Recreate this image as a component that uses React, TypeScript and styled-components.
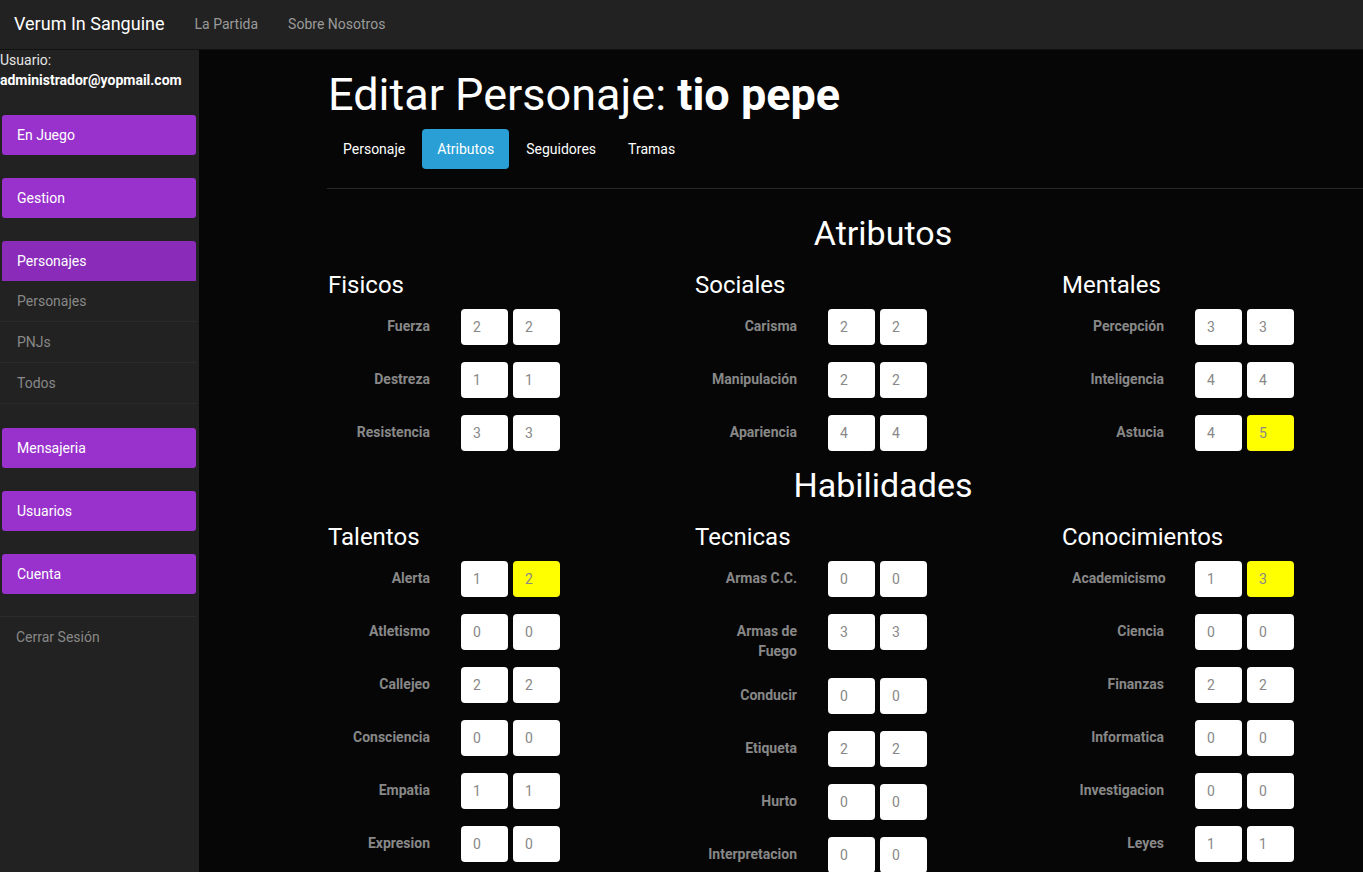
import React from "react";
import styled, { createGlobalStyle } from "styled-components";

const GlobalStyle = createGlobalStyle`
  html, body {
    margin: 0;
    padding: 0;
    overflow: hidden;
    background: #060606;
  }
  body {
    font-family: Roboto, "Helvetica Neue", Arial, sans-serif;
    font-size: 14px;
    line-height: 20px;
    color: #888;
  }
  * { box-sizing: border-box; }
`;

const Page = styled.div`
  display: flex;
  flex-direction: column;
  width: 1363px;
  height: 872px;
  overflow: hidden;
`;

const Navbar = styled.nav`
  height: 50px;
  flex: none;
  display: flex;
  align-items: center;
  background: #222;
  border-bottom: 1px solid #111;
  padding-left: 14px;
`;

const Brand = styled.span`
  font-size: 18px;
  color: #fff;
  margin-right: 30px;
  padding-bottom: 2px;
`;

const NavLink = styled.span`
  font-size: 14px;
  color: #9a9a9a;
  margin-right: 30px;
  padding-bottom: 2px;
`;

const Body = styled.div`
  display: flex;
  flex: 1;
  min-height: 0;
`;

const Sidebar = styled.aside`
  width: 199px;
  flex: none;
  background: #222;
  display: flex;
  flex-direction: column;
`;

const UserInfo = styled.div`
  color: #e6e6e6;
  line-height: 20px;
  margin-bottom: 25px;
`;

const Email = styled.div`
  font-weight: 700;
  color: #fff;
`;

const MenuButton = styled.div<{ $active?: boolean }>`
  margin: 0 3px 0 2px;
  height: 40px;
  display: flex;
  align-items: center;
  padding-left: 15px;
  border-radius: 3px;
  color: #fff;
  background: ${(p) => (p.$active ? "#8a2cb9" : "#9932cc")};
  margin-bottom: ${(p) => (p.$active ? "0" : "23px")};
  ${(p) => (p.$active ? "border-radius: 3px 3px 0 0;" : "")}
`;

const SubList = styled.div`
  margin: 0 2px 24px 0;
  display: flex;
  flex-direction: column;
`;

const SubItem = styled.div`
  height: 41px;
  display: flex;
  align-items: center;
  padding-left: 17px;
  color: #888;
  background: #222;
  border-bottom: 1px solid #2a2a2a;
`;

const Logout = styled.div`
  margin-top: -1px;
  margin-right: 4px;
  border-top: 1px solid #2c2c2c;
  height: 41px;
  display: flex;
  align-items: center;
  padding-left: 16px;
  color: #888;
`;

const Main = styled.main`
  flex: 1;
  min-width: 0;
  overflow: hidden;
  background: #060606;
`;

const Content = styled.div`
  width: 1110px;
  margin-left: 129px;
  padding-top: 20px;
`;

const Title = styled.h1`
  margin: 0;
  font-size: 45px;
  line-height: 49px;
  font-weight: 400;
  color: #fff;
  b {
    font-weight: 700;
  }
`;

const Tabs = styled.div`
  display: flex;
  gap: 2px;
  margin-top: 10px;
`;

const Tab = styled.div<{ $active?: boolean }>`
  height: 40px;
  padding: 0 15px 1px;
  display: flex;
  align-items: center;
  border-radius: 4px;
  color: #fff;
  background: ${(p) => (p.$active ? "#2a9fd6" : "transparent")};
`;

const Rule = styled.hr`
  margin: 19px 0 0 -1px;
  border: 0;
  border-top: 1px solid #282828;
  width: 1200px;
`;

const SectionTitle = styled.h2<{ $first?: boolean }>`
  margin: ${(p) => (p.$first ? "24px" : "14px")} 0 0;
  font-size: 34px;
  line-height: 40px;
  font-weight: 400;
  color: #fff;
  text-align: center;
`;

const Grid = styled.div`
  display: grid;
  grid-template-columns: repeat(3, 367px);
  margin-top: 19px;
`;

const Column = styled.div`
  display: flex;
  flex-direction: column;
`;

const ColTitle = styled.h3`
  margin: 0 0 11px;
  font-size: 24px;
  line-height: 26px;
  font-weight: 400;
  color: #fff;
`;

const Rows = styled.div`
  display: flex;
  flex-direction: column;
  gap: 17px;
`;

const Row = styled.div`
  display: flex;
  align-items: flex-start;
`;

const Label = styled.label`
  width: 102px;
  padding: 7px 0 0 10px;
  margin-right: 31px;
  text-align: right;
  font-weight: 700;
  line-height: 20px;
  color: #888;
`;

const Inputs = styled.div`
  display: flex;
  gap: 5px;
`;

const Box = styled.div<{ $changed?: boolean }>`
  width: 47px;
  height: 36px;
  border-radius: 4px;
  padding-left: 12px;
  display: flex;
  align-items: center;
  color: #888;
  background: ${(p) => (p.$changed ? "#ffff00" : "#fff")};
`;

type Stat = [string, number, number];

const attrs: { title: string; rows: Stat[] }[] = [
  { title: "Fisicos", rows: [["Fuerza", 2, 2], ["Destreza", 1, 1], ["Resistencia", 3, 3]] },
  { title: "Sociales", rows: [["Carisma", 2, 2], ["Manipulación", 2, 2], ["Apariencia", 4, 4]] },
  { title: "Mentales", rows: [["Percepción", 3, 3], ["Inteligencia", 4, 4], ["Astucia", 4, 5]] },
];

const skills: { title: string; rows: Stat[] }[] = [
  {
    title: "Talentos",
    rows: [
      ["Alerta", 1, 2],
      ["Atletismo", 0, 0],
      ["Callejeo", 2, 2],
      ["Consciencia", 0, 0],
      ["Empatia", 1, 1],
      ["Expresion", 0, 0],
    ],
  },
  {
    title: "Tecnicas",
    rows: [
      ["Armas C.C.", 0, 0],
      ["Armas de Fuego", 3, 3],
      ["Conducir", 0, 0],
      ["Etiqueta", 2, 2],
      ["Hurto", 0, 0],
      ["Interpretacion", 0, 0],
    ],
  },
  {
    title: "Conocimientos",
    rows: [
      ["Academicismo", 1, 3],
      ["Ciencia", 0, 0],
      ["Finanzas", 2, 2],
      ["Informatica", 0, 0],
      ["Investigacion", 0, 0],
      ["Leyes", 1, 1],
    ],
  },
];

const StatGrid = ({ groups }: { groups: { title: string; rows: Stat[] }[] }) => (
  <Grid>
    {groups.map((g) => (
      <Column key={g.title}>
        <ColTitle>{g.title}</ColTitle>
        <Rows>
          {g.rows.map(([name, a, b]) => (
            <Row key={name}>
              <Label>{name}</Label>
              <Inputs>
                <Box>{a}</Box>
                <Box $changed={a !== b}>{b}</Box>
              </Inputs>
            </Row>
          ))}
        </Rows>
      </Column>
    ))}
  </Grid>
);

export default function App() {
  return (
    <>
      <GlobalStyle />
      <Page>
        <Navbar>
          <Brand>Verum In Sanguine</Brand>
          <NavLink>La Partida</NavLink>
          <NavLink>Sobre Nosotros</NavLink>
        </Navbar>
        <Body>
          <Sidebar>
            <UserInfo>
              <div>Usuario:</div>
              <Email>administrador@yopmail.com</Email>
            </UserInfo>
            <MenuButton>En Juego</MenuButton>
            <MenuButton>Gestion</MenuButton>
            <MenuButton $active>Personajes</MenuButton>
            <SubList>
              <SubItem>Personajes</SubItem>
              <SubItem>PNJs</SubItem>
              <SubItem>Todos</SubItem>
            </SubList>
            <MenuButton>Mensajeria</MenuButton>
            <MenuButton>Usuarios</MenuButton>
            <MenuButton>Cuenta</MenuButton>
            <Logout>Cerrar Sesión</Logout>
          </Sidebar>
          <Main>
            <Content>
              <Title>
                Editar Personaje: <b>tio pepe</b>
              </Title>
              <Tabs>
                <Tab>Personaje</Tab>
                <Tab $active>Atributos</Tab>
                <Tab>Seguidores</Tab>
                <Tab>Tramas</Tab>
              </Tabs>
              <Rule />
              <SectionTitle $first>Atributos</SectionTitle>
              <StatGrid groups={attrs} />
              <SectionTitle>Habilidades</SectionTitle>
              <StatGrid groups={skills} />
            </Content>
          </Main>
        </Body>
      </Page>
    </>
  );
}
